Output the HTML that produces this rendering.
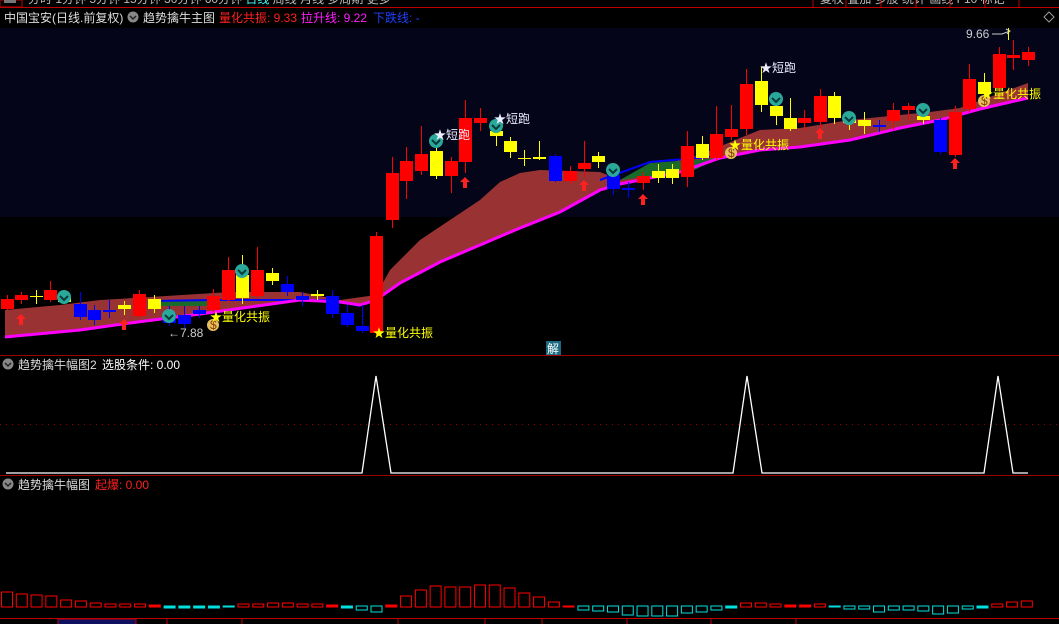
<!DOCTYPE html>
<html><head><meta charset="utf-8">
<style>
html,body{margin:0;padding:0;background:#000;width:1059px;height:624px;overflow:hidden}
svg{display:block}
text{font-family:"Liberation Sans","Noto Sans CJK SC",sans-serif;font-size:12px}
</style></head><body>
<svg id="s" width="1059" height="624" xmlns="http://www.w3.org/2000/svg">
<rect width="1059" height="624" fill="#000"/>
<rect x="0" y="28" width="1059" height="189" fill="#05051a"/>
<!-- top bar -->
<text x="28" y="3" fill="#bbb">分时 1分钟 5分钟 15分钟 30分钟 60分钟 <tspan fill="#4ff">日线</tspan> 周线 月线 多周期 更多</text>
<text x="820" y="3" fill="#bbb">复权 叠加 多股 统计 画线 F10 标记</text>
<line x1="0" y1="7.5" x2="1059" y2="7.5" stroke="#c00000"/>
<rect x="0" y="0" width="22" height="7" fill="none" stroke="#c00000"/>
<rect x="4" y="0" width="12" height="3" fill="#777"/>
<g stroke="#c00000"><line x1="813" y1="0" x2="813" y2="7"/><line x1="846" y1="0" x2="846" y2="7"/><line x1="881" y1="0" x2="881" y2="7"/><line x1="916" y1="0" x2="916" y2="7"/><line x1="950" y1="0" x2="950" y2="7"/><line x1="985" y1="0" x2="985" y2="7"/><line x1="1019" y1="0" x2="1019" y2="7"/></g>
<!-- header -->
<text x="4" y="22" fill="#ddd">中国宝安(日线.前复权)</text>
<circle cx="133" cy="17" r="5.5" fill="#888"/><path d="M130 16 l3 3 3-3" stroke="#222" fill="none" stroke-width="1.5"/>
<text x="143" y="22" fill="#ddd">趋势擒牛主图</text>
<text x="219" y="22" fill="#ff2020">量化共振: 9.33</text>
<text x="301" y="22" fill="#ff20ff">拉升线: 9.22</text>
<text x="373" y="22" fill="#2040ff">下跌线: -</text>
<path d="M1054 17 l-5 -5 -5 5 5 5z" fill="none" stroke="#999"/>
<g id="main"></g>
<line x1="0" y1="355.5" x2="1059" y2="355.5" stroke="#a00000"/>
<line x1="0" y1="475.5" x2="1059" y2="475.5" stroke="#a00000"/>
<circle cx="8" cy="364" r="5.5" fill="#888"/><path d="M5 363 l3 3 3-3" stroke="#222" fill="none" stroke-width="1.5"/>
<text x="18" y="369" fill="#ddd">趋势擒牛幅图2</text><text x="102" y="369" fill="#fff">选股条件: 0.00</text>
<line x1="0" y1="424.5" x2="1059" y2="424.5" stroke="#a00000" stroke-dasharray="1,5"/>
<polyline points="6,473 362,473 376,376 391,473 733,473 747,376 762,473 984,473 998,376 1013,473 1028,473" fill="none" stroke="#fff" stroke-width="1.3"/>
<circle cx="8" cy="484" r="5.5" fill="#888"/><path d="M5 483 l3 3 3-3" stroke="#222" fill="none" stroke-width="1.5"/>
<text x="18" y="489" fill="#ddd">趋势擒牛幅图</text><text x="95" y="489" fill="#ff2020">起爆: 0.00</text>
<g id="vol"></g>
<line x1="0" y1="618.5" x2="1059" y2="618.5" stroke="#c00000"/>
<rect x="58" y="619" width="78" height="6" fill="#101060" stroke="#c00000"/>
<g stroke="#c00000"><line x1="167" y1="619" x2="167" y2="624"/><line x1="242" y1="619" x2="242" y2="624"/><line x1="398" y1="619" x2="398" y2="624"/><line x1="485" y1="619" x2="485" y2="624"/><line x1="542" y1="619" x2="542" y2="624"/><line x1="627" y1="619" x2="627" y2="624"/><line x1="711" y1="619" x2="711" y2="624"/><line x1="796" y1="619" x2="796" y2="624"/></g>
</svg>
<script>
var NS="http://www.w3.org/2000/svg";
function el(p,t,a,txt){var e=document.createElementNS(NS,t);for(var k in a)e.setAttribute(k,a[k]);if(txt)e.textContent=txt;p.appendChild(e);return e;}
var m=document.getElementById('main');
var up=[[5,310],[60,305],[100,300],[150,297],[230,292],[300,292],[340,300],[376,295],[390,270],[420,240],[450,220],[480,200],[500,182],[520,173],[540,170],[600,172],[620,180],[660,165],[700,155],[740,138],[760,130],[800,128],[850,120],[900,115],[930,112],[960,108],[1028,83]];
var lo=[[5,337],[80,330],[130,323],[200,314],[250,307],[300,300],[340,302],[360,305],[376,300],[400,283],[440,262],[480,245],[520,228],[560,212],[600,190],[620,184],[680,172],[720,158],[760,150],[800,147],[850,140],[900,128],[940,120],[980,109],[1028,98]];
var pts=up.map(p=>p.join(',')).concat(lo.slice().reverse().map(p=>p.join(','))).join(' ');
el(m,'polygon',{points:pts,fill:'#993333'});
el(m,'polygon',{points:'150,301 215,300 215,306 150,306',fill:'#1a6a2a'});
el(m,'polygon',{points:'620,180 650,163 720,158 690,172',fill:'#1a6a2a'});
el(m,'polyline',{points:'150,301 215,300 330,300 360,306',fill:'none',stroke:'#0000ff','stroke-width':2});
el(m,'polyline',{points:'600,180 650,162 720,156',fill:'none',stroke:'#0000ff','stroke-width':2});
el(m,'polyline',{points:lo.map(p=>p.join(',')).join(' '),fill:'none',stroke:'#ff00ff','stroke-width':3});
var R='#ff0000',Y='#ffff00',B='#0000ff';
var c=[[7,299,309,295,310,R],[21,295,300,292,304,R],[36,296,297,290,304,Y],[50,290,300,281,302,R],[64,298,302,294,304,Y],[80,304,317,292,320,B],[94,310,320,305,325,B],[109,310,312,300,318,B],[124,305,309,301,315,Y],[139,294,316,290,318,R],[154,299,309,295,313,Y],[169,313,323,306,326,B],[184,315,324,306,328,B],[199,310,314,306,318,B],[213,296,310,289,312,R],[228,270,300,257,302,R],[242,275,298,255,304,Y],[257,270,296,247,299,R],[272,273,281,268,285,Y],[287,284,292,276,296,B],[302,296,300,292,306,B],[317,294,296,290,300,Y],[332,296,314,290,318,B],[347,313,325,305,327,B],[362,326,331,305,333,B],[376,236,333,232,336,R],[392,173,220,157,228,R],[406,161,181,147,199,R],[421,154,171,126,175,R],[436,151,176,143,179,Y],[451,161,176,157,193,R],[465,118,162,100,173,R],[480,118,123,108,131,R],[496,131,136,124,146,Y],[510,141,152,137,158,Y],[524,158,159,150,166,Y],[539,157,159,141,160,Y],[555,156,181,154,182,B],[570,171,181,166,184,R],[584,163,169,141,177,R],[598,156,162,152,168,Y],[613,175,189,170,195,B],[628,188,190,182,198,B],[643,176,183,172,190,R],[658,171,178,164,183,Y],[672,169,178,164,184,Y],[687,146,177,131,187,R],[702,144,158,136,160,Y],[716,134,158,106,160,R],[731,129,137,105,140,R],[746,84,129,69,135,R],[761,81,105,67,112,Y],[776,106,116,99,125,Y],[790,118,129,98,131,Y],[804,118,123,110,130,R],[820,96,122,89,130,R],[834,96,118,92,124,Y],[849,119,123,112,130,Y],[864,120,126,112,134,Y],[879,125,127,120,132,B],[893,110,121,103,130,R],[908,106,110,103,120,R],[923,116,120,110,124,Y],[940,120,152,118,154,B],[955,112,155,106,157,R],[969,79,109,64,112,R],[984,82,94,73,100,Y],[999,54,88,47,92,R],[1013,55,58,40,70,R],[1028,52,60,47,66,R]];
c.forEach(function(d){el(m,'line',{x1:d[0]+.5,y1:d[3],x2:d[0]+.5,y2:d[4],stroke:d[5]});el(m,'rect',{x:d[0]-6,y:d[1],width:13,height:Math.max(1,d[2]-d[1]),fill:d[5]});});
[[21,322],[124,327],[465,185],[584,188],[643,202],[820,136],[955,166]].forEach(function(a){el(m,'path',{d:'M'+a[0]+' '+(a[1]-8)+' l-5 5 h3 v6 h4 v-6 h3z',fill:'#ff2020'});});
[[64,297],[169,316],[242,271],[436,141],[496,126],[613,170],[776,99],[849,118],[923,110]].forEach(function(a){el(m,'circle',{cx:a[0],cy:a[1],r:7,fill:'#2aa89a'});el(m,'path',{d:'M'+(a[0]-4)+' '+(a[1]-1)+' l4 4 4-4',stroke:'#0a3a3a','stroke-width':2,fill:'none'});});
[[213,325],[731,153],[984,101]].forEach(function(a){el(m,'circle',{cx:a[0],cy:a[1],r:6,fill:'#e8c060'});el(m,'text',{x:a[0]-3,y:a[1]+4,fill:'#804000','font-size':'9'},'$');});
el(m,'text',{x:210,y:321,fill:'#ffff00'},'★量化共振');
el(m,'text',{x:373,y:337,fill:'#ffff00'},'★量化共振');
el(m,'text',{x:729,y:149,fill:'#ffff00'},'★量化共振');
el(m,'text',{x:981,y:98,fill:'#ffff00'},'★量化共振');
el(m,'text',{x:434,y:139,fill:'#eeeeff'},'★短跑');
el(m,'text',{x:494,y:123,fill:'#eeeeff'},'★短跑');
el(m,'text',{x:760,y:72,fill:'#eeeeff'},'★短跑');
el(m,'text',{x:168,y:337,fill:'#ccc'},'←7.88');
el(m,'text',{x:966,y:38,fill:'#ccc'},'9.66');
el(m,'path',{d:'M992 34 h10 l8 -3 M1006 29 l4 2 -3 3',stroke:'#ccc',fill:'none'});
el(m,'line',{x1:1008.5,y1:28,x2:1008.5,y2:40,stroke:'#ffff00'});
el(m,'rect',{x:546,y:341,width:15,height:14,fill:'#1a6a80'});
el(m,'text',{x:547,y:353,fill:'#fff'},'解');
var v=document.getElementById('vol');
var h=[15,13,12,11,7,6,4,3,3,3,2,-2,-2,-2,-2,-1,3,3,4,4,3,3,2,-2,-4,-6,2,11,17,21,20,20,22,22,19,14,10,5,1,-4,-5,-6,-9,-10,-10,-10,-7,-6,-4,-2,4,4,3,2,2,3,-1,-3,-3,-6,-4,-4,-5,-8,-7,-3,-2,3,5,6];
h.forEach(function(d,i){var x=7+i*14.78-5.5;if(d>0){el(v,'rect',{x:x,y:607-d,width:11,height:d,fill:d<=2?'#ff0000':'none',stroke:'#ff0000'});}else{d=-d;el(v,'rect',{x:x,y:606,width:11,height:d,fill:d<=2?'#00e0e0':'none',stroke:'#00e0e0'});}});
</script>
</body></html>
